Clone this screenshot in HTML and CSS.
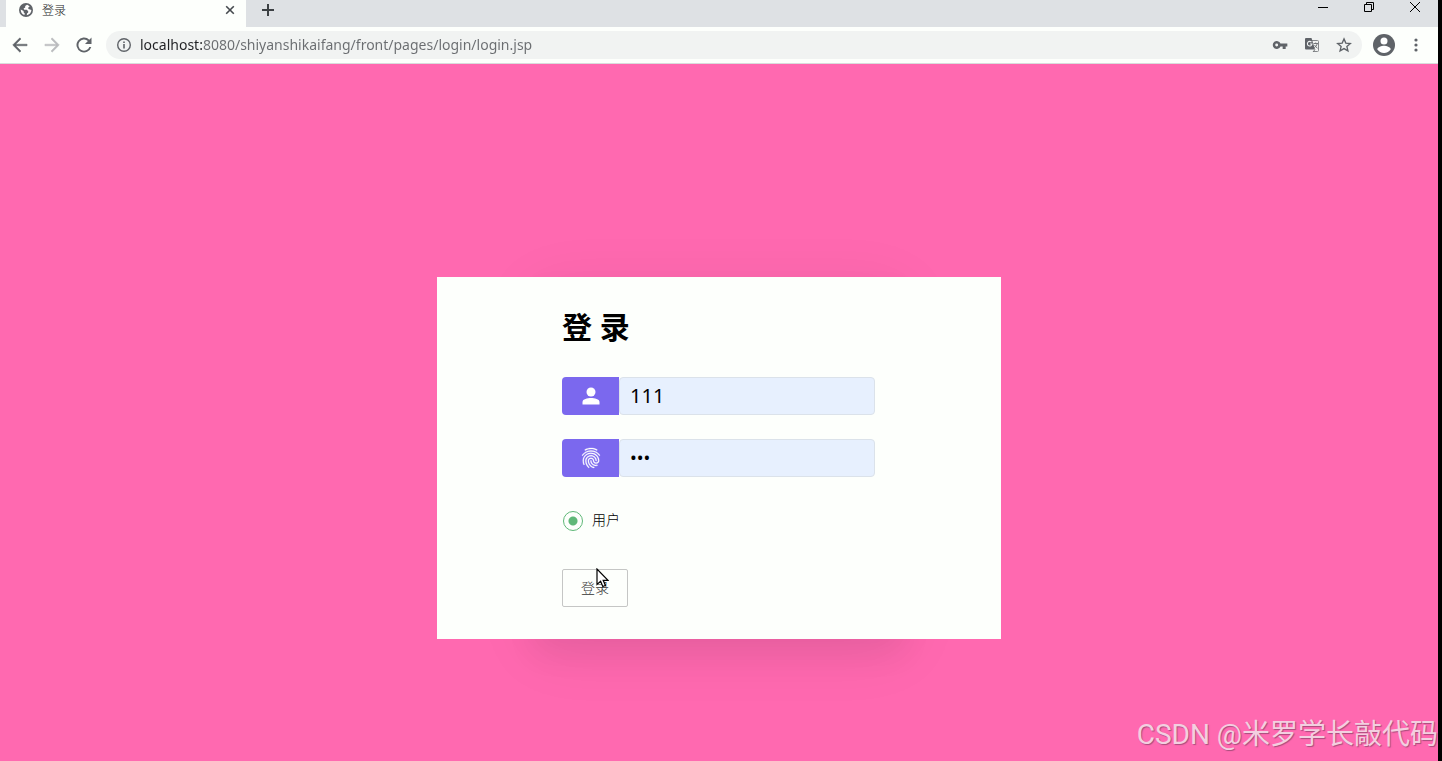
FILE: index.html
```
<!DOCTYPE html>
<html lang="zh-CN">
<head>
  <meta charset="UTF-8" />
  <meta name="viewport" content="width=device-width, initial-scale=1.0"/>
  <title>登录</title>
  <link rel="stylesheet" href="styles.css">
</head>
<body>

  <header class="browser">
    <div class="tab-strip">
      <div class="tab-prev"></div>
      <div class="tab">
        <svg class="favicon" width="14" height="14" viewBox="0 0 14 14">
          <circle cx="7" cy="7" r="7" fill="#5f6368"/>
          <path d="M8 1.8 6.2 3v1.4L4.6 5.6l.6 1.2h2.6l1.4 1.4v1.2l-1.2 1-.2 1.8c2.6-.4 4.6-2.6 4.6-5.2L11 6.6 9.4 6l-.2-1.4 1.4-.8C10 2.8 9 2 8 1.8zM1.7 6.4C1.6 9 3 11.2 5.4 12l.4-1.6-1.2-1.2V8z" fill="#fff"/>
        </svg>
        <span class="tab-title">登录</span>
        <button class="icon-btn tab-close" aria-label="关闭">
          <svg width="10" height="10" viewBox="0 0 10 10"><path d="M1.2 1.2l7.6 7.6M8.8 1.2L1.2 8.8" stroke="#45494d" stroke-width="1.6"/></svg>
        </button>
      </div>
      <button class="icon-btn new-tab" aria-label="新标签页">
        <svg width="12" height="12" viewBox="0 0 12 12"><path d="M6 0v12M0 6h12" stroke="#3c4043" stroke-width="2"/></svg>
      </button>
      <div class="window-controls">
        <button class="icon-btn" aria-label="最小化">
          <svg width="10" height="10" viewBox="0 0 10 10"><path d="M0 5.5h10" stroke="#000"/></svg>
        </button>
        <button class="icon-btn" aria-label="还原">
          <svg width="10" height="10" viewBox="0 0 10 10"><path d="M.5 2.5h7v7h-7zM2.5 2.5v-2h7v7h-2" fill="none" stroke="#000"/></svg>
        </button>
        <button class="icon-btn" aria-label="关闭窗口">
          <svg width="10" height="10" viewBox="0 0 10 10"><path d="M0 0l10 10M10 0L0 10" stroke="#000"/></svg>
        </button>
      </div>
    </div>

    <div class="toolbar">
      <button class="icon-btn" aria-label="后退">
        <svg width="20" height="20" viewBox="0 0 24 24"><path d="M20.500 11H7l6.200-6.200L11.800 3.400 3.200 12l8.600 8.600 1.400-1.400L7 13h13.500z" fill="#5f6368" stroke="#5f6368" stroke-width=".5"/></svg>
      </button>
      <button class="icon-btn" aria-label="前进">
        <svg width="20" height="20" viewBox="0 0 24 24"><path d="M3.500 11H17l-6.200-6.200 1.400-1.400 8.600 8.600-8.600 8.600-1.400-1.400L17 13H3.500z" fill="#babcbe" stroke="#babcbe" stroke-width=".5"/></svg>
      </button>
      <button class="icon-btn" aria-label="重新加载">
        <svg width="20" height="20" viewBox="0 0 24 24"><path d="M18.4 5.6A9 9 0 1 0 20.7 14.300h-2.300A6.700 6.700 0 1 1 16.700 7.300L13.200 10.800H21V3z" fill="#5f6368"/></svg>
      </button>
      <div class="address">
        <svg width="16" height="16" viewBox="0 0 16 16"><circle cx="8" cy="8" r="6.300" fill="none" stroke="#5f6368" stroke-width="1.400"/><path d="M7.200 7h1.600v4.500H7.200zM7.200 4.500h1.600V6H7.200z" fill="#5f6368"/></svg>
        <input class="url" type="text" aria-label="地址" value="localhost:8080/shiyanshikaifang/front/pages/login/login.jsp">
        <button class="icon-btn" aria-label="密码">
          <svg width="16" height="16" viewBox="0 0 24 24"><path d="M12.700 9.800A6 6 0 1 0 12.700 14.200H16V18h4.500v-3.800H23V9.800zM7 14.200a2.200 2.200 0 1 1 0-4.400 2.200 2.200 0 0 1 0 4.400z" fill="#5f6368"/></svg>
        </button>
        <button class="icon-btn" aria-label="翻译">
          <svg width="16" height="16" viewBox="0 0 16 16">
            <path d="M8 3.500h5.500a1 1 0 0 1 1 1v9a1 1 0 0 1-1 1H9" fill="none" stroke="#85888b"/>
            <path d="M2 1h5.500L11 12.500H2a1 1 0 0 1-1-1V2a1 1 0 0 1 1-1z" fill="#5f6368"/>
            <path d="M7.500 5.200A2.300 2.300 0 1 0 8 7H6" fill="none" stroke="#f1f3f4" stroke-width="1.100"/>
            <path d="M9.500 6.500H14M11.700 5.500v1M13.200 6.500c-.4 2-1.500 3.300-3 4.300M10.500 8c.8 1.500 1.700 2.400 3 3.200M9 15l2-2.500" fill="none" stroke="#75787b"/>
          </svg>
        </button>
        <button class="icon-btn" aria-label="收藏">
          <svg width="16" height="16" viewBox="0 0 24 24"><path d="M12 2.800l2.700 6.300 6.800.6-5.200 4.500 1.600 6.700L12 17.400l-5.900 3.500 1.600-6.700-5.200-4.500 6.800-.6z" fill="none" stroke="#5f6368" stroke-width="2"/></svg>
        </button>
      </div>
      <button class="icon-btn profile" aria-label="用户">
        <svg width="22" height="22" viewBox="0 0 22 22"><circle cx="11" cy="11" r="11" fill="#5f6368"/><circle cx="11" cy="7" r="3.500" fill="#fff"/><path d="M4.200 15.300c.3-2.300 4.500-3.500 6.800-3.500s6.500 1.200 6.800 3.500C16.300 17.700 13.800 19 11 19s-5.300-1.300-6.800-3.700z" fill="#fff"/></svg>
      </button>
      <button class="icon-btn" aria-label="更多">
        <svg width="4" height="14" viewBox="0 0 4 14"><g fill="#5f6368"><circle cx="2" cy="2" r="1.600"/><circle cx="2" cy="7" r="1.600"/><circle cx="2" cy="12" r="1.600"/></g></svg>
      </button>
    </div>
  </header>

  <main class="page">
    <form class="login-card">
      <h1>登 录</h1>

      <div class="field">
        <label for="username" aria-label="账号">
          <svg width="24" height="24" viewBox="0 0 24 24"><circle cx="12" cy="8" r="4.500" fill="#fff"/><path d="M3.500 20.500V18c0-3 5-4 8.500-4s8.500 1 8.500 4v2.500z" fill="#fff"/></svg>
        </label>
        <input type="text" id="username" value="111">
      </div>

      <div class="field">
        <label for="password" aria-label="密码">
          <svg width="24" height="24" viewBox="0 0 24 24"><path d="M17.810 4.470c-.08 0-.16-.02-.23-.06C15.660 3.420 14 3 12.010 3c-1.980 0-3.860.47-5.570 1.410-.24.13-.54.04-.68-.2-.13-.24-.04-.55.2-.68C7.820 2.520 9.860 2 12.010 2c2.130 0 3.990.47 6.030 1.520.25.13.34.43.21.67-.09.18-.26.28-.44.28zM3.500 9.720c-.1 0-.2-.03-.29-.09-.23-.16-.28-.47-.12-.7.99-1.400 2.250-2.500 3.750-3.270C9.980 4.040 14 4.030 17.150 5.650c1.500.77 2.760 1.860 3.750 3.250.16.22.11.54-.12.7-.23.16-.54.11-.7-.12-.9-1.260-2.040-2.250-3.390-2.940-2.870-1.470-6.540-1.470-9.400.01-1.360.7-2.500 1.700-3.400 2.960-.08.14-.23.21-.39.21zm6.250 12.070c-.13 0-.26-.05-.35-.15-.87-.87-1.340-1.430-2.010-2.640-.69-1.230-1.050-2.730-1.050-4.340 0-2.970 2.540-5.390 5.660-5.390s5.660 2.420 5.660 5.390c0 .28-.22.5-.5.5s-.5-.22-.5-.5c0-2.420-2.090-4.390-4.660-4.390s-4.660 1.970-4.660 4.390c0 1.440.32 2.770.93 3.850.64 1.150 1.080 1.640 1.850 2.420.19.2.19.51 0 .71-.11.1-.24.15-.37.15zm7.170-1.850c-1.190 0-2.240-.3-3.100-.89-1.490-1.010-2.380-2.650-2.380-4.390 0-.28.22-.5.5-.5s.5.22.5.5c0 1.410.72 2.740 1.940 3.560.71.48 1.540.71 2.540.71.24 0 .64-.03 1.040-.1.27-.05.53.13.58.41.05.27-.13.53-.41.58-.57.11-1.070.12-1.210.12zM14.910 22c-.04 0-.09-.01-.13-.02-1.590-.44-2.630-1.030-3.720-2.100-1.400-1.390-2.170-3.240-2.170-5.220 0-1.620 1.380-2.940 3.080-2.940s3.080 1.320 3.080 2.940c0 1.070.93 1.940 2.080 1.940s2.080-.87 2.080-1.940c0-3.770-3.250-6.830-7.250-6.830-2.840 0-5.440 1.580-6.610 4.030-.39.81-.59 1.760-.59 2.800 0 .78.07 2.010.67 3.610.1.26-.03.55-.29.64-.26.1-.55-.04-.64-.29-.49-1.310-.73-2.610-.73-3.960 0-1.200.23-2.290.68-3.240 1.330-2.790 4.280-4.600 7.510-4.600 4.550 0 8.250 3.510 8.250 7.830 0 1.620-1.380 2.940-3.080 2.940s-3.080-1.320-3.080-2.940c0-1.070-.93-1.940-2.080-1.940s-2.080.87-2.080 1.940c0 1.710.66 3.310 1.870 4.510.95.94 1.860 1.460 3.270 1.850.27.07.42.35.35.61-.05.23-.26.38-.47.38z" fill="#fff" stroke="#fff" stroke-width=".3"/></svg>
        </label>
        <input type="password" id="password" value="111">
      </div>

      <div class="role">
        <input type="radio" id="roleUser" name="role" checked>
        <label for="roleUser">用户</label>
      </div>

      <button type="button" class="login-btn">登录
        <svg class="pointer" width="13" height="20" viewBox="0 0 13 20"><path d="M1 1v15.500l3.600-3.300 2.200 5.300 2.600-1.100-2.200-5.100H12z" fill="#fff" stroke="#000" stroke-width="1.200"/></svg>
      </button>
    </form>

    <p class="watermark">CSDN @米罗学长敲代码</p>
  </main>

</body>
</html>
```
FILE: styles.css
```
* {
  box-sizing: border-box;
}

body {
  margin: 0;
  min-height: 100vh;
  display: flex;
  flex-direction: column;
  border-right: 4px solid #000;
  font-family: "Noto Sans", "Noto Sans CJK SC", sans-serif;
  background-color: #ff69b0;
  color: #000;
}

svg {
  display: block;
  flex: none;
}

input {
  font-family: inherit;
  outline: none;
}

.icon-btn {
  display: flex;
  align-items: center;
  justify-content: center;
  flex: none;
  width: 32px;
  height: 32px;
  padding: 0;
  border: none;
  background: none;
}

/* browser chrome */
.browser {
  background-color: #fdfffc;
  border-bottom: 1px solid #d9dcdc;
}

.tab-strip {
  display: flex;
  height: 27px;
  background-color: #dee1e4;
}

.tab-prev {
  width: 6px;
  background-color: #dee1e4;
}

.tab {
  display: flex;
  align-items: center;
  width: 240px;
  padding: 0 8px 7px 13px;
  background-color: #fdfffc;
}

.tab-title {
  flex: 1;
  margin-left: 9px;
  font-family: "Noto Sans CJK SC", sans-serif;
  font-size: 12px;
  font-weight: 300;
  line-height: 20px;
  color: #202124;
}

.tab-close {
  width: 16px;
  height: 20px;
}

.new-tab {
  width: 44px;
  height: 20px;
}

.window-controls {
  display: flex;
  margin-left: auto;
}

.window-controls .icon-btn {
  width: 46px;
  height: 14px;
}

.toolbar {
  display: flex;
  align-items: center;
  height: 36px;
  padding: 0 6px 0 4px;
}

.address {
  display: flex;
  align-items: center;
  flex: 1;
  height: 28px;
  margin-left: 6px;
  padding: 0 2px 0 10px;
  border-radius: 14px;
  background-color: #f1f3f2;
}

/* host is darker than the rest of the url */
.url {
  flex: 1;
  min-width: 0;
  margin-left: 8px;
  padding: 0;
  border: none;
  font-size: 14px;
  line-height: 20px;
  color: transparent;
  background: linear-gradient(90deg, #202124 62px, #6a6d70 62px);
  -webkit-background-clip: text;
  background-clip: text;
}

.profile {
  margin-left: 6px;
}

/* login page */
.page {
  position: relative;
  flex: 1;
  padding: 213px 16px 64px;
}

.login-card {
  position: relative;
  z-index: 0;
  max-width: 564px;
  margin: 0 auto;
  padding: 32px 126px 32px 125px;
  background-color: #fdfffc;
}

.login-card::before,
.login-card::after {
  content: "";
  position: absolute;
  inset: 0;
  z-index: -1;
}

.login-card::before {
  inset: 0 96px;
  box-shadow: 0 12px 60px rgba(0, 0, 0, 0.07), 0 16px 30px rgba(0, 0, 0, 0.05);
}

.login-card::after {
  background-color: #fdfffc;
}

.login-card h1 {
  margin: 0 0 32px;
  font-size: 30px;
  line-height: 36px;
}

.field {
  display: flex;
  height: 38px;
  margin-bottom: 24px;
}

.field label {
  display: flex;
  align-items: center;
  justify-content: center;
  width: 57px;
  border-radius: 4px 0 0 4px;
  background-color: #7b68ee;
}

.field input {
  flex: 1;
  min-width: 0;
  padding: 0 10px 2px;
  border: 1px solid #dbe2ea;
  border-radius: 4px;
  background-color: #e7f0fe;
  font-size: 20px;
}

.field input[type="password"] {
  font-size: 18px;
}

.role {
  display: flex;
  align-items: center;
  gap: 9px;
  height: 38px;
  margin-bottom: 30px;
  font-size: 14px;
}

.role label,
.login-btn {
  padding-bottom: 2px;
  font-family: "Noto Sans CJK SC", sans-serif;
  font-weight: 300;
}

.role input {
  appearance: none;
  width: 20px;
  height: 20px;
  margin: 1px 0 0 1px;
  border: 1px solid #5fb878;
  border-radius: 50%;
  background: radial-gradient(circle, #5fb878 4px, transparent 5px);
}

.login-btn {
  position: relative;
  display: block;
  height: 38px;
  padding: 0 18px 2px;
  border: 1px solid #c5c6c5;
  border-radius: 2px;
  background-color: #fdfffc;
  font-size: 14px;
  color: #333;
}

.pointer {
  position: absolute;
  left: 33px;
  top: -2px;
}

.watermark {
  position: absolute;
  right: 0;
  bottom: 6px;
  margin: 0;
  font-family: Roboto, "Noto Sans CJK SC", sans-serif;
  font-size: 28px;
  line-height: 40px;
  color: #f3cfe0;
  text-shadow: 1px 1px 1px rgba(110, 60, 90, 0.6);
}
```
